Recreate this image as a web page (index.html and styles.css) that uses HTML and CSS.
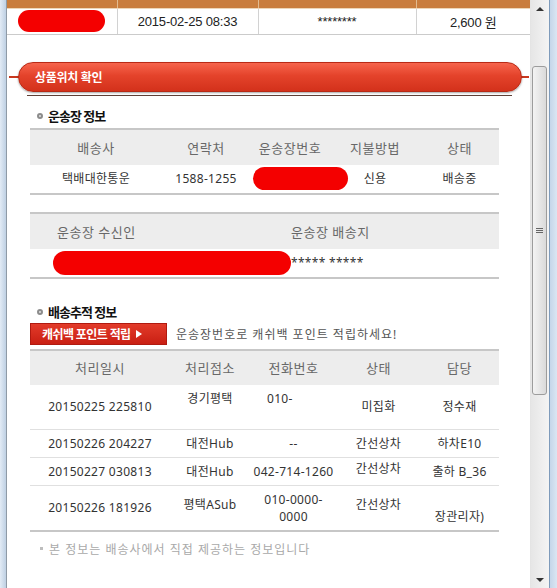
FILE: index.html
```html
<!DOCTYPE html>
<html lang="ko">
<head>
  <meta charset="UTF-8" />
  <meta name="viewport" content="width=device-width, initial-scale=1.0" />
  <title>상품위치 확인</title>
  <link rel="stylesheet" href="styles.css">
</head>
<body>
  <div class="window">
    <div class="frame-left"></div>

    <div class="viewport">
      <table class="order">
        <tr class="order-bar"><td></td><td></td><td></td><td></td></tr>
        <tr class="order-row">
          <td><span class="mask mask-order"></span></td>
          <td>2015-02-25 08:33</td>
          <td>********</td>
          <td>2,600 원</td>
        </tr>
      </table>

      <div class="section-head"><div class="pill">상품위치 확인</div></div>
      <div class="section-rule"></div>

      <div class="content">
        <h2 class="sub-title"><span class="dot"></span>운송장 정보</h2>
        <table class="grid grid-invoice">
          <colgroup>
            <col class="w132"><col class="w88"><col class="w80"><col class="w90"><col class="w79">
          </colgroup>
          <tr class="head">
            <th>배송사</th><th>연락처</th><th>운송장번호</th><th>지불방법</th><th>상태</th>
          </tr>
          <tr class="row">
            <td>택배대한통운</td>
            <td>1588-1255</td>
            <td class="left"><span class="mask mask-invoice"></span></td>
            <td>신용</td>
            <td>배송중</td>
          </tr>
        </table>

        <table class="grid grid-receiver">
          <colgroup><col class="w261"><col class="w208"></colgroup>
          <tr class="head">
            <th class="left pad-name">운송장 수신인</th><th class="left">운송장 배송지</th>
          </tr>
          <tr class="row">
            <td class="left"><span class="mask mask-receiver"></span></td>
            <td class="left stars">***** *****</td>
          </tr>
        </table>

        <h2 class="sub-title sub-track"><span class="dot"></span>배송추적 정보</h2>
        <div class="cashback">
          <div class="cashback-btn">캐쉬백 포인트 적립<span class="arrow"></span></div>
          <span class="cashback-text">운송장번호로 캐쉬백 포인트 적립하세요!</span>
        </div>

        <table class="grid grid-track">
          <colgroup>
            <col class="w140"><col class="w80"><col class="w87"><col class="w83"><col class="w79">
          </colgroup>
          <tr class="head">
            <th>처리일시</th><th>처리점소</th><th>전화번호</th><th>상태</th><th>담당</th>
          </tr>
          <tr class="row tall line">
            <td>20150225 225810</td>
            <td>경기평택<br>&nbsp;</td>
            <td class="left pad-phone">010-<br>&nbsp;</td>
            <td>미집화</td>
            <td>정수재</td>
          </tr>
          <tr class="row line">
            <td>20150226 204227</td>
            <td>대전Hub</td>
            <td>--</td>
            <td>간선상차</td>
            <td>하차E10</td>
          </tr>
          <tr class="row line">
            <td>20150227 030813</td>
            <td>대전Hub</td>
            <td>042-714-1260</td>
            <td class="lift">간선상차</td>
            <td>출하 B_36</td>
          </tr>
          <tr class="row tall">
            <td>20150226 181926</td>
            <td class="lift">평택ASub</td>
            <td>010-0000-<br>0000</td>
            <td class="lift">간선상차</td>
            <td>&nbsp;<br>장관리자)</td>
          </tr>
        </table>

        <p class="note"><span class="square"></span>본 정보는 배송사에서 직접 제공하는 정보입니다</p>
      </div>
    </div>

    <div class="scrollbar">
      <div class="sb-arrow"><span class="tri-up"></span></div>
      <div class="sb-track">
        <div class="sb-thumb"><span class="grip"></span></div>
      </div>
      <div class="sb-arrow"><span class="tri-down"></span></div>
    </div>

    <div class="frame-right"></div>
  </div>
</body>
</html>
```

FILE: styles.css
```css
* {
  box-sizing: border-box;
}
body {
  margin: 0;
  font-family: "Noto Sans", "Noto Sans CJK KR", sans-serif;
  color: #333;
  overflow: hidden;
}
.window {
  display: flex;
  height: 588px;
}
.frame-left {
  width: 7px;
  background: linear-gradient(to right, #e2ebf5, #bfd0e3);
  border-right: 1px solid #8f9aa6;
}
.viewport {
  width: 523px;
  background: #fff;
}

/* order row at the top (scrolled) */
.order {
  width: 523px;
  table-layout: fixed;
  border-collapse: collapse;
}
.order td {
  padding: 0;
  text-align: center;
  border-right: 1px solid #d2d2d2;
}
.order td:nth-child(1) { width: 110px; }
.order td:nth-child(2) { width: 141px; }
.order td:nth-child(3) { width: 158px; }
.order td:last-child { border-right: none; }
.order-bar td {
  height: 8px;
  background: #c97d3d;
  border-right-color: #e2bb8f;
  border-bottom: 1px solid #edd6b8;
}
.order-row td {
  height: 26px;
  font-family: "Liberation Sans", "Noto Sans CJK KR", sans-serif;
  font-size: 13px;
  letter-spacing: -0.2px;
  color: #222;
  border-bottom: 1px solid #cbcbcb;
}

.mask {
  display: inline-block;
  background: #f40000;
  border-radius: 12px;
  vertical-align: middle;
}
.mask-order {
  width: 87px;
  height: 22px;
}
.mask-invoice {
  width: 95px;
  height: 23px;
  margin-left: 3px;
}
.mask-receiver {
  width: 238px;
  height: 24px;
  margin-left: 23px;
}

/* red title pill */
.section-head {
  margin: 27px 1px 0 2px;
  background: linear-gradient(#c8381f, #c8381f) left center / 100% 2px no-repeat;
}
.pill {
  margin: 0 7px 0 9px;
  height: 30px;
  line-height: 30px;
  padding-left: 16px;
  border-radius: 15px;
  border: 1px solid #b92a16;
  background: linear-gradient(#f6644c, #e4432b 45%, #d3311b);
  box-shadow: 0 1px 2px rgba(0, 0, 0, 0.35);
  color: #fff;
  font-size: 12px;
  font-weight: bold;
  letter-spacing: -0.3px;
}
.section-rule {
  margin: 3px 0 0 20px;
  width: 485px;
  border-top: 1px solid #5e4138;
}

.content {
  padding-left: 23px;
}
.sub-title {
  display: flex;
  align-items: center;
  gap: 5px;
  margin: 10px 0 0 7px;
  height: 20px;
  font-size: 13px;
  font-weight: bold;
  letter-spacing: -1px;
  color: #111;
}
.sub-track {
  margin-top: 23px;
}
.dot {
  width: 6px;
  height: 6px;
  border-radius: 50%;
  border: 2px solid #8c8c8c;
  background: #e2e2e2;
}

/* grids */
.grid {
  width: 469px;
  table-layout: fixed;
  border-collapse: separate;
  border-spacing: 0;
  border-top: 2px solid #c7c7c7;
  border-bottom: 2px solid #c7c7c7;
}
.grid-invoice {
  margin-top: 2px;
}
.grid-receiver {
  margin-top: 17px;
}
.grid-track {
  margin-top: 4px;
}
.w132 { width: 132px; }
.w88 { width: 88px; }
.w80 { width: 80px; }
.w90 { width: 90px; }
.w79 { width: 79px; }
.w261 { width: 261px; }
.w208 { width: 208px; }
.w140 { width: 140px; }
.w87 { width: 87px; }
.w83 { width: 83px; }
.grid th,
.grid td {
  padding: 0;
  text-align: center;
  vertical-align: middle;
  white-space: nowrap;
}
.grid th {
  height: 35px;
  background: #ededed;
  color: #686868;
  font-size: 13px;
  font-weight: normal;
  letter-spacing: 0.5px;
}
.grid-track th {
  height: 34px;
}
.grid td {
  height: 28px;
  font-size: 12px;
  line-height: 17px;
  letter-spacing: 0.3px;
  color: #333;
}
.grid .left {
  text-align: left;
}
.grid .pad-name {
  padding-left: 27px;
}
.grid .pad-phone {
  padding-left: 17px;
}
.stars {
  color: #555;
  letter-spacing: 0.5px;
}
.grid .tall td {
  height: 44px;
}
.grid .line td {
  height: 28px;
  border-bottom: 1px solid #e0e0e0;
}
.grid .tall.line td {
  height: 45px;
}
.grid td.lift {
  padding-bottom: 6px;
}

/* cashback */
.cashback {
  display: flex;
  align-items: center;
  margin-top: 1px;
  height: 22px;
}
.cashback-btn {
  display: flex;
  align-items: center;
  width: 137px;
  height: 22px;
  padding-left: 11px;
  background: linear-gradient(#e23b2a, #c91f13);
  border: 1px solid #b01a10;
  color: #fff;
  font-size: 12px;
  font-weight: bold;
  letter-spacing: -0.6px;
}
.arrow {
  margin-left: 5px;
  border-left: 6px solid #fff;
  border-top: 4px solid transparent;
  border-bottom: 4px solid transparent;
}
.cashback-text {
  margin-left: 9px;
  font-size: 12px;
  letter-spacing: 1px;
  color: #555;
}

.note {
  display: flex;
  align-items: center;
  gap: 6px;
  margin: 8px 0 0 10px;
  height: 18px;
  font-size: 12px;
  letter-spacing: 1px;
  color: #a9a9a9;
}
.square {
  width: 3px;
  height: 3px;
  background: #bdbdbd;
}

/* scrollbar */
.scrollbar {
  display: flex;
  flex-direction: column;
  width: 19px;
  border-left: 1px solid #e4e4e4;
  background: linear-gradient(to right, #e6e6e6, #f4f4f4);
}
.sb-arrow {
  display: flex;
  align-items: center;
  justify-content: center;
  height: 17px;
}
.tri-up {
  border-bottom: 4px solid #333;
  border-left: 4px solid transparent;
  border-right: 4px solid transparent;
}
.tri-down {
  border-top: 4px solid #333;
  border-left: 4px solid transparent;
  border-right: 4px solid transparent;
}
.sb-track {
  flex: 1;
}
.sb-thumb {
  display: flex;
  align-items: center;
  justify-content: center;
  margin: 49px 0 0 1px;
  width: 15px;
  height: 329px;
  border: 1px solid #9c9c9c;
  border-radius: 3px;
  background: linear-gradient(to right, #f3f3f3, #dadada);
}
.grip {
  width: 7px;
  height: 5px;
  border-top: 1px solid #666;
  border-bottom: 1px solid #666;
  background: linear-gradient(#666, #666) center / 100% 1px no-repeat;
}
.frame-right {
  flex: 1;
  border-left: 1px solid #7e9bbb;
  background: linear-gradient(to right, #c5d6e9, #dbe6f2);
}
```
